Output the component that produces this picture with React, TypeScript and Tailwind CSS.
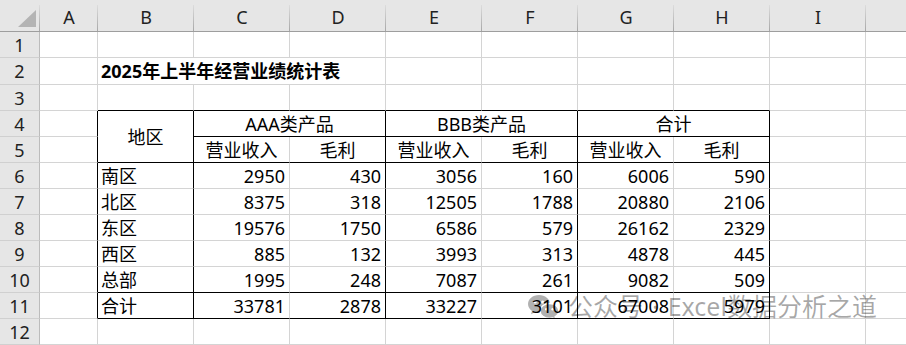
import type { FC, ReactNode } from "react";

type Row = [string, number, number, number, number, number, number];

const COLS = ["A", "B", "C", "D", "E", "F", "G", "H", "I", ""];

const DATA: Row[] = [
  ["南区", 2950, 430, 3056, 160, 6006, 590],
  ["北区", 8375, 318, 12505, 1788, 20880, 2106],
  ["东区", 19576, 1750, 6586, 579, 26162, 2329],
  ["西区", 885, 132, 3993, 313, 4878, 445],
  ["总部", 1995, 248, 7087, 261, 9082, 509],
  ["合计", 33781, 2878, 33227, 3101, 67008, 5979],
];

type CellProps = {
  children?: ReactNode;
  r?: boolean;
  b?: boolean;
  className?: string;
};

// one worksheet cell: gray gridline unless the table border is black there
const Cell: FC<CellProps> = ({ children, r = false, b = false, className = "" }) => (
  <div
    className={`flex items-center whitespace-nowrap border-r border-b ${
      r ? "border-r-black" : "border-r-[#d4d4d4]"
    } ${b ? "border-b-black" : "border-b-[#d4d4d4]"} ${className}`}
  >
    {children}
  </div>
);

const RowHead: FC<{ n: number }> = ({ n }) => (
  <div className="flex items-center justify-center border-r border-b border-r-[#bcbcbc] border-b-[#d0d0d0] bg-[#e6e6e6] text-[#222]">
    {n}
  </div>
);

const ColHead: FC<{ label: string }> = ({ label }) => (
  <div className="relative flex items-center justify-center border-b border-b-[#9e9e9e] bg-[#e6e6e6] pt-[2px] text-[#222]">
    {label}
    <span className="absolute right-0 top-[5px] bottom-0 w-px bg-linear-to-b from-[#dcdcdc] to-[#a8a8a8]" />
  </div>
);

// wechat-style double bubble, see-through so the cell text stays readable
const WeChatIcon = () => (
  <svg
    width="33"
    height="25"
    viewBox="0 0 33 25"
    className="h-[25px] w-[33px] shrink-0 opacity-30"
  >
    <defs>
      <mask id="wm-mask">
        <rect width="33" height="25" fill="white" />
        <circle cx="8.2" cy="8" r="1.5" fill="black" />
        <circle cx="15.6" cy="8" r="1.5" fill="black" />
        <path
          d="M22.5 9.5c-5.2 0-9.5 3.4-9.5 7.5s4.3 7.5 9.5 7.5c1.1 0 2.2-.2 3.2-.5l3.2 1.6-.8-2.8c2.3-1.4 3.9-3.5 3.9-5.8 0-4.1-4.3-7.5-9.5-7.5z"
          fill="none"
          stroke="black"
          strokeWidth="1.4"
        />
        <circle cx="19.2" cy="15.2" r="1.2" fill="black" />
        <circle cx="25.6" cy="15.2" r="1.2" fill="black" />
      </mask>
    </defs>
    <g mask="url(#wm-mask)" fill="black">
      <path d="M12 1C5.6 1 1 5.1 1 10c0 2.8 1.5 5.2 3.9 6.9L4 20.2l3.9-2c1.3.4 2.7.7 4.1.7 6.1 0 11-4 11-8.9S18.1 1 12 1z" />
      <path d="M22.5 9.5c-5.2 0-9.5 3.4-9.5 7.5s4.3 7.5 9.5 7.5c1.1 0 2.2-.2 3.2-.5l3.2 1.6-.8-2.8c2.3-1.4 3.9-3.5 3.9-5.8 0-4.1-4.3-7.5-9.5-7.5z" />
    </g>
  </svg>
);

export default function App() {
  const num = "justify-end pr-[4px]";
  const ctr = "justify-center";
  const lft = "justify-start pl-[3px]";

  return (
    <div className="relative h-[345px] w-[906px] overflow-hidden bg-white font-['Noto_Sans','Noto_Sans_CJK_SC',sans-serif] text-[18px] leading-none text-black">
      <div className="grid grid-cols-[40px_58px_repeat(9,96px)] grid-rows-[32px_26px_27px_repeat(10,26px)]">
        {/* column header row */}
        <div className="relative border-b border-b-[#9e9e9e] bg-[#e6e6e6]">
          <svg width="40" height="31" className="absolute left-0 top-0">
            <polygon points="36,10 36,27 18,27" fill="#b4b4b4" />
          </svg>
          <span className="absolute right-0 top-[5px] bottom-0 w-px bg-linear-to-b from-[#dcdcdc] to-[#a8a8a8]" />
        </div>
        {COLS.map((c, i) => (
          <ColHead key={i} label={c} />
        ))}

        {/* row 1 */}
        <RowHead n={1} />
        {COLS.map((_, i) => (
          <Cell key={i} />
        ))}

        {/* row 2 - title overflows across B:D */}
        <RowHead n={2} />
        <Cell />
        <Cell className={`col-span-3 font-bold ${lft}`}>2025年上半年经营业绩统计表</Cell>
        {COLS.slice(4).map((_, i) => (
          <Cell key={i} />
        ))}

        {/* row 3 */}
        <RowHead n={3} />
        <Cell />
        {[1, 2, 3, 4, 5, 6, 7].map((i) => (
          <Cell key={i} b />
        ))}
        <Cell />
        <Cell />

        {/* row 4 */}
        <RowHead n={4} />
        <Cell r />
        <Cell r b className={`row-span-2 ${ctr}`}>
          地区
        </Cell>
        <Cell r b className={`col-span-2 ${ctr}`}>
          AAA类产品
        </Cell>
        <Cell r b className={`col-span-2 ${ctr}`}>
          BBB类产品
        </Cell>
        <Cell r b className={`col-span-2 ${ctr}`}>
          合计
        </Cell>
        <Cell />
        <Cell />

        {/* row 5 */}
        <RowHead n={5} />
        <Cell r />
        <Cell b className={ctr}>营业收入</Cell>
        <Cell r b className={ctr}>毛利</Cell>
        <Cell b className={ctr}>营业收入</Cell>
        <Cell r b className={ctr}>毛利</Cell>
        <Cell b className={ctr}>营业收入</Cell>
        <Cell r b className={ctr}>毛利</Cell>
        <Cell />
        <Cell />

        {/* rows 6-11 */}
        {DATA.map((d, ri) => {
          const last = ri >= 4;
          return [
            <RowHead key={`h${ri}`} n={ri + 6} />,
            <Cell key={`a${ri}`} r />,
            <Cell key={`b${ri}`} r b={last} className={lft}>
              {d[0]}
            </Cell>,
            <Cell key={`c${ri}`} b={last} className={num}>
              {d[1]}
            </Cell>,
            <Cell key={`d${ri}`} r b={last} className={num}>
              {d[2]}
            </Cell>,
            <Cell key={`e${ri}`} b={last} className={num}>
              {d[3]}
            </Cell>,
            <Cell key={`f${ri}`} r b={last} className={num}>
              {d[4]}
            </Cell>,
            <Cell key={`g${ri}`} b={last} className={num}>
              {d[5]}
            </Cell>,
            <Cell key={`i${ri}`} r b={last} className={num}>
              {d[6]}
            </Cell>,
            <Cell key={`j${ri}`} />,
            <Cell key={`k${ri}`} />,
          ];
        })}

        {/* row 12 */}
        <RowHead n={12} />
        {COLS.map((_, i) => (
          <Cell key={i} />
        ))}
      </div>

      {/* watermark */}
      <div className="pointer-events-none absolute left-[527px] top-[294px] flex items-center font-['Noto_Sans','Noto_Sans_CJK_SC',sans-serif] text-[25px] leading-none text-black/35">
        <WeChatIcon />
        <span className="ml-[8px]">公众号</span>
        <span className="mx-[9px]">·</span>
        <span>Excel数据分析之道</span>
      </div>
    </div>
  );
}
